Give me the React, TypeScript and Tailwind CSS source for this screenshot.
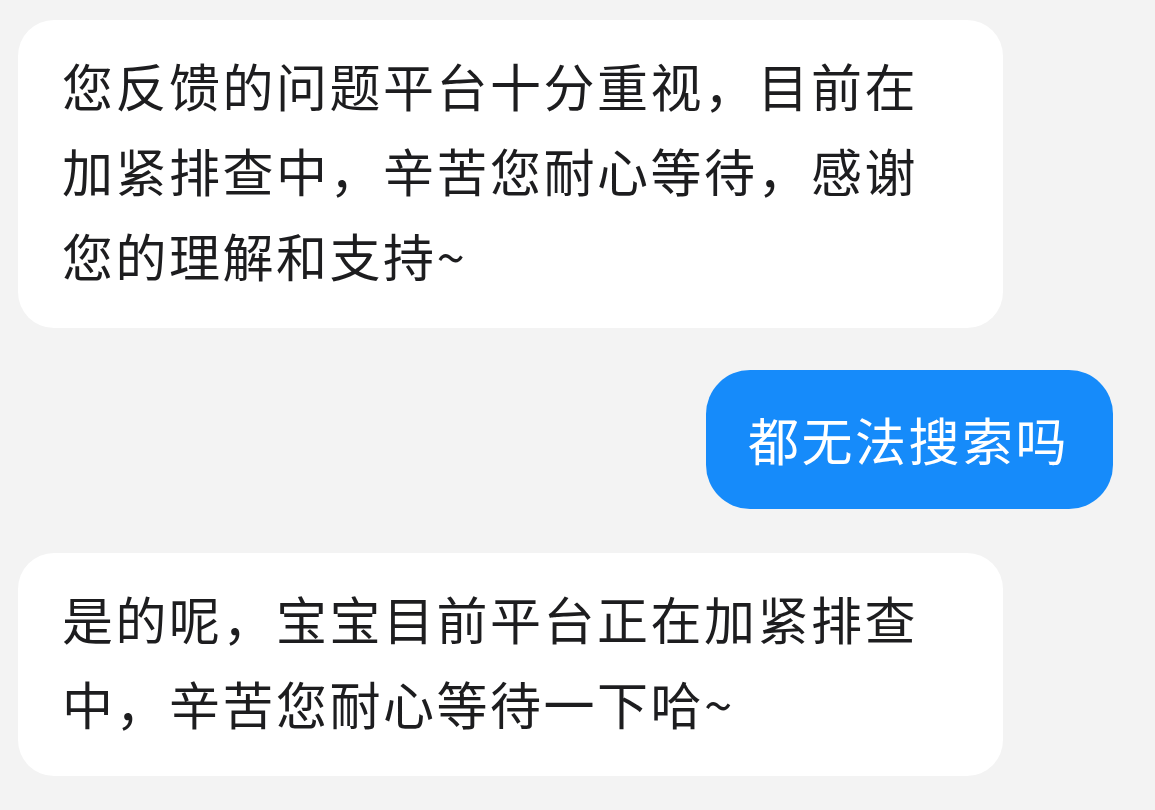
import React from 'react';

type Message = {
  id: number;
  from: 'agent' | 'me';
  lines: string[];
};

const messages: Message[] = [
  {
    id: 1,
    from: 'agent',
    lines: ['您反馈的问题平台十分重视，目前在', '加紧排查中，辛苦您耐心等待，感谢', '您的理解和支持~'],
  },
  { id: 2, from: 'me', lines: ['都无法搜索吗'] },
  {
    id: 3,
    from: 'agent',
    lines: ['是的呢，宝宝目前平台正在加紧排查', '中，辛苦您耐心等待一下哈~'],
  },
];

export default function App() {
  return (
    <div
      className="w-[1155px] h-[810px] overflow-hidden bg-[#f3f3f3] pt-5 flex flex-col text-[#1d1d1f]"
      style={{ fontFamily: '"Noto Sans CJK SC", "Noto Sans", sans-serif' }}
    >
      {messages.map((msg) =>
        msg.from === 'agent' ? (
          <div key={msg.id} className="pl-[18px]">
            <div className="w-[985px] bg-white rounded-[36px] pl-[44px] pr-[40px] pt-[23px] pb-[30px] text-[51px] leading-[85px] tracking-[2.5px]">
              {msg.lines.map((line) => (
                <div key={line} className="whitespace-nowrap">
                  {line}
                </div>
              ))}
            </div>
          </div>
        ) : (
          <div key={msg.id} className="flex justify-end pr-[42px] mt-[42px] mb-[44px]">
            <div className="w-[407px] h-[139px] flex items-center bg-[#168bfa] text-white rounded-[44px] pl-[42px] text-[51px] leading-[85px] tracking-[2.5px]">
              {msg.lines[0]}
            </div>
          </div>
        ),
      )}
    </div>
  );
}
